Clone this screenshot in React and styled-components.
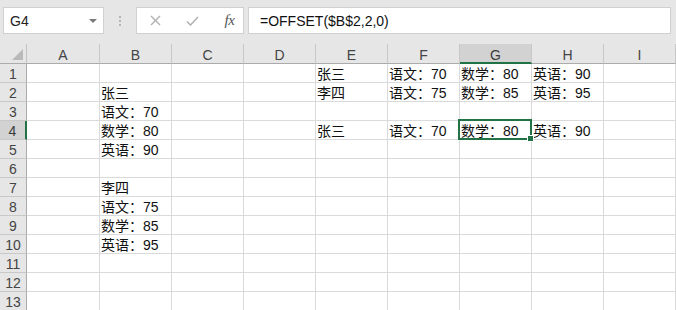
import React from 'react';
import styled, { createGlobalStyle } from 'styled-components';

const Global = createGlobalStyle`
  html, body { margin: 0; padding: 0; overflow: hidden; background: #fff; }
  body { font-family: "Liberation Sans", "Noto Sans CJK SC", sans-serif; }
`;

const Page = styled.div`
  width: 676px;
  height: 310px;
  overflow: hidden;
  background: #fff;
`;

const Toolbar = styled.div`
  display: flex;
  align-items: flex-start;
  height: 44px;
  box-sizing: border-box;
  padding: 7px 5px 0 3px;
  background: #e6e6e6;
`;

const NameBox = styled.div`
  position: relative;
  width: 101px;
  height: 27px;
  box-sizing: border-box;
  background: #fff;
  border: 1px solid #d0d0d0;
  padding: 5px 0 0 6px;
  font-size: 14px;
  line-height: 16px;
  color: #222;
`;

const Caret = styled.span`
  position: absolute;
  right: 6px;
  top: 11px;
  width: 0;
  height: 0;
  border-left: 4px solid transparent;
  border-right: 4px solid transparent;
  border-top: 4px solid #7a7a7a;
`;

const Separator = styled.div`
  width: 32px;
  height: 27px;
  display: flex;
  flex-direction: column;
  align-items: center;
  justify-content: center;
  gap: 2px;
`;

const Dot = styled.span`
  width: 2px;
  height: 2px;
  background: #b4b4b4;
`;

const FxBox = styled.div`
  width: 108px;
  height: 27px;
  box-sizing: border-box;
  background: #fff;
  border: 1px solid #d0d0d0;
  display: flex;
  align-items: center;
  padding-left: 10px;
  gap: 20px;
`;

const IconSlot = styled.span`
  display: flex;
  align-items: center;
  justify-content: center;
  width: 17px;
  height: 20px;
`;

const FxLabel = styled.span`
  font-family: "Liberation Serif", serif;
  font-style: italic;
  font-size: 15px;
  color: #555;
  letter-spacing: -0.5px;
`;

const FormulaInput = styled.div`
  flex: 1;
  margin-left: 4px;
  height: 27px;
  box-sizing: border-box;
  background: #fff;
  border: 1px solid #d0d0d0;
  padding: 5px 0 0 11px;
  font-size: 14px;
  line-height: 16px;
  color: #111;
`;

const Sheet = styled.div`
  display: grid;
  grid-template-columns: 27px 73px repeat(8, 72px);
  grid-template-rows: 20px;
  grid-auto-rows: 19px;
`;

const Corner = styled.div`
  position: relative;
  background: #e6e6e6;
  border-right: 1px solid #c3c3c3;
  border-bottom: 1px solid #ababab;
  box-sizing: border-box;
`;

const Triangle = styled.span`
  position: absolute;
  right: 3px;
  bottom: 3px;
  width: 0;
  height: 0;
  border-left: 11px solid transparent;
  border-bottom: 11px solid #b9b9b9;
`;

const ColHeader = styled.div`
  box-sizing: border-box;
  background: ${p => (p.$active ? '#d2d2d2' : '#e6e6e6')};
  border-right: 1px solid #c8c8c8;
  border-bottom: ${p => (p.$active ? '2px solid #217346' : '1px solid #ababab')};
  text-align: center;
  font-size: 14px;
  line-height: 16px;
  padding-top: 3px;
  color: ${p => (p.$active ? '#3a3a3a' : '#444')};
`;

const RowHeader = styled.div`
  box-sizing: border-box;
  background: ${p => (p.$active ? '#d2d2d2' : '#e6e6e6')};
  border-right: ${p => (p.$active ? '2px solid #217346' : '1px solid #ababab')};
  border-bottom: 1px solid #c8c8c8;
  text-align: center;
  font-size: 14px;
  line-height: 16px;
  padding-top: 2px;
  color: ${p => (p.$active ? '#3a3a3a' : '#444')};
`;

const Cell = styled.div`
  position: relative;
  box-sizing: border-box;
  border-right: 1px solid #dadada;
  border-bottom: 1px solid #dadada;
  padding: 3px 0 0 1px;
  font-size: 14px;
  line-height: 15px;
  color: #111;
  white-space: nowrap;
`;

const Selection = styled.span`
  position: absolute;
  left: -2px;
  top: -2px;
  right: -1px;
  bottom: -1px;
  border: 2px solid #217346;
  pointer-events: none;
  z-index: 2;
`;

const FillHandle = styled.span`
  position: absolute;
  right: -3px;
  bottom: -3px;
  width: 5px;
  height: 5px;
  background: #217346;
  border: 1px solid #fff;
  z-index: 3;
`;

const COLS = ['A', 'B', 'C', 'D', 'E', 'F', 'G', 'H', 'I'];

const DATA = {
  1: { E: '张三', F: '语文：70', G: '数学：80', H: '英语：90' },
  2: { B: '张三', E: '李四', F: '语文：75', G: '数学：85', H: '英语：95' },
  3: { B: '语文：70' },
  4: { B: '数学：80', E: '张三', F: '语文：70', G: '数学：80', H: '英语：90' },
  5: { B: '英语：90' },
  7: { B: '李四' },
  8: { B: '语文：75' },
  9: { B: '数学：85' },
  10: { B: '英语：95' },
};

const ACTIVE = { col: 'G', row: 4 };

export default function App() {
  const rows = Array.from({ length: 13 }, (_, i) => i + 1);
  return (
    <Page>
      <Global />
      <Toolbar>
        <NameBox>
          G4
          <Caret />
        </NameBox>
        <Separator>
          <Dot />
          <Dot />
          <Dot />
        </Separator>
        <FxBox>
          <IconSlot>
            <svg width="11" height="11" viewBox="0 0 11 11">
              <path d="M1 1L10 10M10 1L1 10" stroke="#b0b0b0" strokeWidth="1.4" fill="none" />
            </svg>
          </IconSlot>
          <IconSlot>
            <svg width="13" height="10" viewBox="0 0 13 10">
              <path d="M1 5.5L4.5 9L12 1" stroke="#b0b0b0" strokeWidth="1.5" fill="none" />
            </svg>
          </IconSlot>
          <IconSlot>
            <FxLabel>fx</FxLabel>
          </IconSlot>
        </FxBox>
        <FormulaInput>=OFFSET($B$2,2,0)</FormulaInput>
      </Toolbar>
      <Sheet>
        <Corner>
          <Triangle />
        </Corner>
        {COLS.map(c => (
          <ColHeader key={c} $active={c === ACTIVE.col}>
            {c}
          </ColHeader>
        ))}
        {rows.map(r => (
          <React.Fragment key={r}>
            <RowHeader $active={r === ACTIVE.row}>{r}</RowHeader>
            {COLS.map(c => {
              const sel = r === ACTIVE.row && c === ACTIVE.col;
              return (
                <Cell key={c}>
                  {(DATA[r] && DATA[r][c]) || ''}
                  {sel && (
                    <>
                      <Selection />
                      <FillHandle />
                    </>
                  )}
                </Cell>
              );
            })}
          </React.Fragment>
        ))}
      </Sheet>
    </Page>
  );
}
